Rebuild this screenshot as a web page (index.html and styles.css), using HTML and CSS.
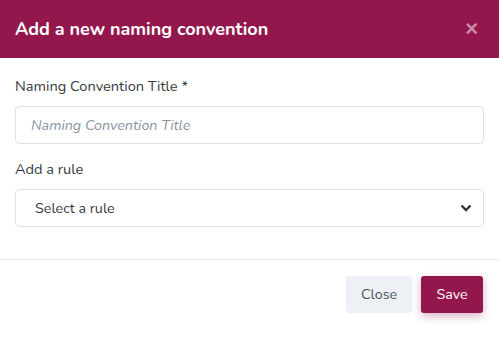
FILE: index.html
```html
<!DOCTYPE html>
<html lang="en">
<head>
    <meta charset="UTF-8">
    <meta name="viewport" content="width=device-width, initial-scale=1.0">
    <title>Add a new naming convention</title>
    <link rel="stylesheet" href="styles.css">
</head>
<body>
    <div class="modal">
        <header class="modal-header">
            <h1 class="modal-title">Add a new naming convention</h1>
            <button class="btn-x">&times;</button>
        </header>

        <main class="modal-body">
            <div class="form-group">
                <label for="title">Naming Convention Title *</label>
                <input type="text" id="title" class="form-control" placeholder="Naming Convention Title">
            </div>
            <div class="form-group">
                <label for="rule">Add a rule</label>
                <div class="select-wrap">
                    <select id="rule" class="form-control">
                        <option>Select a rule</option>
                    </select>
                    <svg class="chevron" width="12" height="8" viewBox="0 0 12 8">
                        <path d="M1.5 1.5 L6 6 L10.5 1.5" fill="none" stroke="#333" stroke-width="2.4"/>
                    </svg>
                </div>
            </div>
        </main>

        <footer class="modal-footer">
            <button class="btn btn-light">Close</button>
            <button class="btn btn-primary">Save</button>
        </footer>
    </div>
</body>
</html>
```

FILE: styles.css
```css
body {
    font-family: "Nunito", "Lato", "Open Sans", sans-serif;
    margin: 0;
    padding: 0;
    background-color: #fff;
    color: #212529;
}

.modal {
    width: 499px;
}

.modal-header {
    background-color: #93164c;
    color: white;
    height: 58px;
    padding: 0 15px;
    display: flex;
    align-items: center;
    justify-content: space-between;
    box-sizing: border-box;
}

.modal-title {
    margin: 0;
    font-size: 18px;
    font-weight: 700;
}

.btn-x {
    background: none;
    border: none;
    color: rgba(255, 255, 255, 0.5);
    font-size: 22px;
    font-weight: 700;
    padding: 0 6px 0 0;
    line-height: 1;
    cursor: pointer;
}

.modal-body {
    padding: 18px 15px 17px;
    border-bottom: 1px solid #e3e6ea;
}

.form-group {
    margin-bottom: 15px;
}

.form-group label {
    display: block;
    font-size: 14.6px;
    line-height: 21px;
    margin-bottom: 9px;
    color: #343a40;
}

.form-control {
    display: block;
    width: 100%;
    height: 38px;
    box-sizing: border-box;
    border: 1px solid #dfe1e8;
    border-radius: 4px;
    padding: 0 15px;
    font-family: inherit;
    font-size: 14.3px;
    color: #495057;
    background-color: #fff;
}

.form-control::placeholder {
    color: #8a93a0;
    font-style: italic;
}

.select-wrap {
    position: relative;
}

select.form-control {
    appearance: none;
    -webkit-appearance: none;
    padding-left: 19px;
    color: #343a40;
}

.chevron {
    position: absolute;
    right: 12px;
    top: 15px;
}

.modal-footer {
    display: flex;
    justify-content: flex-end;
    gap: 9px;
    padding: 16px 16px;
}

.btn {
    height: 37px;
    padding: 0 15px;
    border: none;
    border-radius: 3px;
    font-family: inherit;
    font-size: 14.3px;
    cursor: pointer;
}

.btn-light {
    background-color: #edf0f5;
    color: #4a5563;
    width: 66px;
}

.btn-primary {
    background-color: #93164c;
    color: white;
    width: 62px;
    box-shadow: 0 3px 8px rgba(147, 22, 76, 0.35);
}
```
